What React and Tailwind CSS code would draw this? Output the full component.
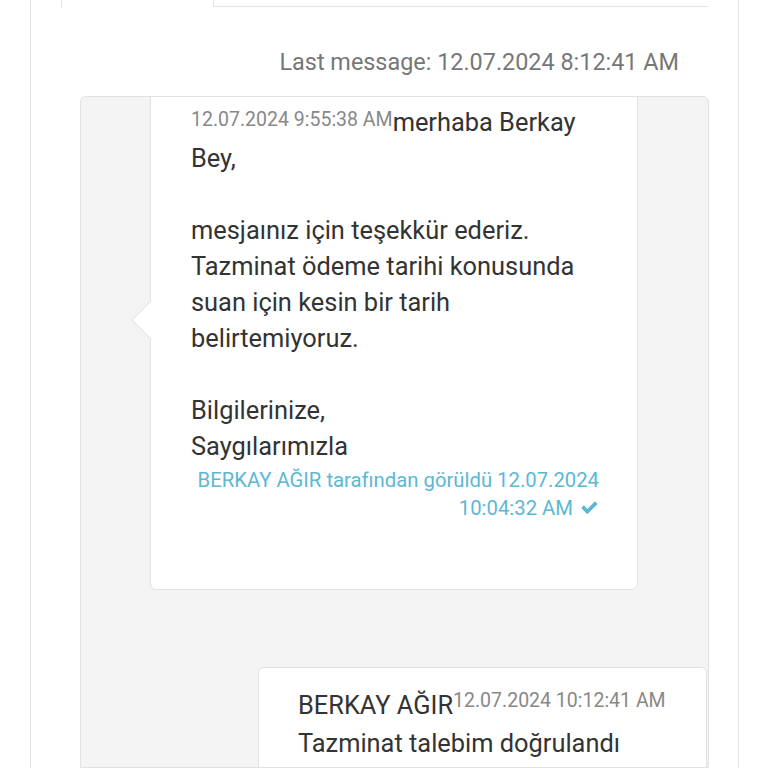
import React from 'react';

function Check() {
  return (
    <svg viewBox="0 0 16 16" className="inline-block w-[19px] h-[19px] ml-[7px] -mt-[4px] align-middle" fill="#5bb8d4">
      <path d="M1 8.4 L3.2 6.2 L6.2 9.2 L12.6 2.8 L14.8 5 L6.2 13.6 Z" />
    </svg>
  );
}

export default function App() {
  return (
    <div className="w-[768px] h-[768px] overflow-hidden bg-white" style={{ fontFamily: 'Roboto, "Liberation Sans", sans-serif' }}>
      <div className="ml-[30px] w-[709px] h-full border-x border-[#e4e4e4] flex flex-col">
        {/* tabs bottom */}
        <div className="flex h-[8px] shrink-0">
          <div className="w-[30px]" />
          <div className="w-[152px] h-[8px] border-l border-[#e4e4e4]" />
          <div className="flex-1 h-[7px] border-l border-b border-[#e4e4e4] rounded-bl-[2px] mr-[30px]" />
        </div>

        <div className="text-right pr-[59px] pt-[38px] text-[23.4px] leading-[32px] text-[#777]">
          Last message: 12.07.2024 8:12:41 AM
        </div>

        <div className="ml-[49px] mt-[18px] w-[629px] flex-1 bg-[#f4f4f4] border border-[#e2e2e2] rounded-t-[6px] overflow-hidden">
          <div className="relative ml-[69px] w-[488px] -mt-[40px] bg-white border border-[#e2e2e2] rounded-[6px] pl-[40px] pr-[38px] pt-[46px] pb-[67px]">
            <div className="absolute left-[-14px] top-[248px] w-[28px] h-[28px] bg-white border-l border-b border-[#e2e2e2] rotate-45" />
            <div className="relative text-[25.4px] leading-[36px] text-[#333]">
              <span className="text-[19.5px] text-[#888] align-top relative top-[-2px]">12.07.2024 9:55:38 AM</span>merhaba Berkay Bey,
              <br />
              <br />
              mesjaınız için teşekkür ederiz. Tazminat ödeme tarihi konusunda suan için kesin bir tarih belirtemiyoruz.
              <br />
              <br />
              Bilgilerinize,
              <br />
              Saygılarımızla
            </div>
            <div className="relative text-right text-[20.3px] leading-[28px] text-[#5bb8d4] mt-[2px]">
              BERKAY AĞIR tarafından görüldü 12.07.2024
              <br />
              10:04:32 AM<Check />
            </div>
          </div>

          <div className="ml-[177px] mt-[77px] w-[449px] bg-white border border-[#e2e2e2] rounded-[6px] pl-[39px] pr-[20px] pt-[18px] pb-[20px] text-[#333]">
            <div className="text-[25.4px] leading-[38px] whitespace-nowrap">
              BERKAY AĞIR<span className="text-[19.5px] text-[#888] align-top relative top-[-4px]">12.07.2024 10:12:41 AM</span>
            </div>
            <div className="text-[25.4px] leading-[38px]">Tazminat talebim doğrulandı</div>
          </div>
        </div>
      </div>
    </div>
  );
}
